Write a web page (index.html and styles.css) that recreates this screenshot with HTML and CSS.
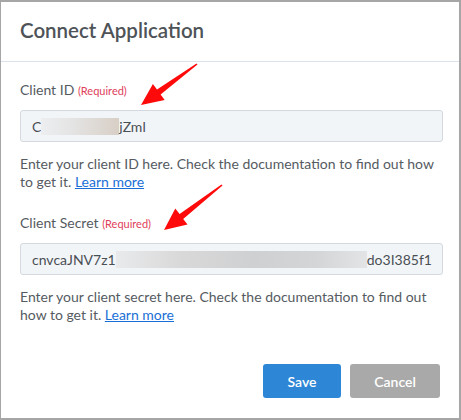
FILE: index.html
```html
<!DOCTYPE html>
<html lang="en">
<head>
<meta charset="utf-8">
<title>Connect Application</title>
<link rel="stylesheet" href="styles.css">
</head>
<body>
<div class="modal">
  <div class="modal-header">
    <h1 class="modal-title">Connect Application</h1>
  </div>
  <div class="modal-body">
    <div class="field">
      <label class="field-label">Client ID <span class="required">(Required)</span></label>
      <div class="field-input"><span>C</span><span class="blur blur-id"></span><span>jZml</span></div>
      <p class="field-help">Enter your client ID here. Check the documentation to find out how to get it. <a href="#">Learn more</a></p>
    </div>
    <div class="field">
      <label class="field-label">Client Secret <span class="required">(Required)</span></label>
      <div class="field-input"><span>cnvcaJNV7z1</span><span class="blur blur-secret"></span><span>do3I385f1</span></div>
      <p class="field-help">Enter your client secret here. Check the documentation to find out how to get it. <a href="#">Learn more</a></p>
    </div>
  </div>
  <div class="modal-footer">
    <button class="btn btn-primary">Save</button>
    <button class="btn btn-secondary">Cancel</button>
  </div>
  <svg class="arrows" width="461" height="420" viewBox="0 0 461 420">
    <polygon fill="#ff0a0a" points="197.5,64.6 160.6,94.4 164.7,100.1 141,105 152.9,83.9 157.0,89.6 196.5,63.4"/>
    <polygon fill="#ff0a0a" points="222.5,185.6 183.2,218.9 187.5,224.4 164,230 175.3,208.6 179.6,214.1 221.5,184.4"/>
  </svg>
</div>
</body>
</html>
```
FILE: styles.css
```css
* { box-sizing: border-box; }
html, body { margin: 0; padding: 0; background: #fff; }
body { font-family: Lato, "Open Sans", sans-serif; color: #555b61; }

.modal {
  position: relative;
  width: 461px;
  height: 420px;
  border-top: 2px solid #a6a6a6;
  border-left: 1px solid #a6a6a6;
  border-right: 2px solid #a6a6a6;
  border-bottom: 2px solid #a6a6a6;
  background: #fff;
  display: flex;
  flex-direction: column;
}

.modal-header {
  height: 60px;
  padding: 0 19px;
  border-bottom: 1px solid #dbe2ec;
  display: flex;
  align-items: center;
}
.modal-title {
  margin: 0;
  font-size: 20.5px;
  font-weight: 600;
  color: #4e5358;
  padding-bottom: 3px;
}

.modal-body {
  padding: 19px 16px 0 19px;
}
.field { margin-bottom: 23px; }
.field-label {
  display: block;
  font-size: 14px;
  line-height: 18px;
  margin-bottom: 10px;
}
.required {
  font-size: 11px;
  color: #e0405a;
}
.field-input {
  height: 32px;
  background: #f2f5f8;
  border: 1px solid #d3d9df;
  border-radius: 3px;
  padding: 0 10px 0 11px;
  display: flex;
  align-items: center;
  font-size: 14px;
  color: #4a4f54;
}
.blur { display: inline-block; height: 17px; }
.blur-id {
  width: 78px;
  background: linear-gradient(to right, #eceef0, #e4e4e4 40%, #dcd6d0 80%, #d8cfc6);
}
.blur-secret {
  width: 258px;
  background: linear-gradient(to right, #e9eaeb, #d9d9da 25%, #cfd0d1 55%, #d4d5d6 80%, #e3e4e5);
}
.field-help {
  margin: 13px 0 0;
  font-size: 14px;
  line-height: 18px;
  color: #555b61;
}
.field-help a { color: #1a6fd6; text-decoration: underline; }

.modal-footer {
  margin-top: auto;
  padding: 0 19px 20px 0;
  display: flex;
  justify-content: flex-end;
  gap: 9px;
}
.btn {
  height: 34px;
  border: none;
  border-radius: 3px;
  font-family: Lato, sans-serif;
  font-size: 14px;
  font-weight: 600;
  color: #fff;
  cursor: pointer;
}
.btn-primary { width: 78px; background: #2e86d6; }
.btn-secondary { width: 90px; background: #a9a9a9; }

.arrows {
  position: absolute;
  left: -1px;
  top: -2px;
  pointer-events: none;
}
```
